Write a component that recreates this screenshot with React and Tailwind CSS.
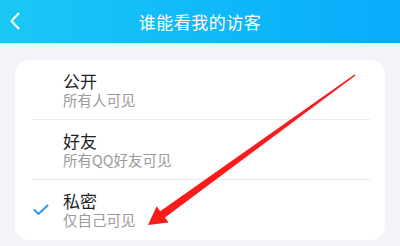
import React from "react";

const rows = [
  { title: "公开", sub: "所有人可见", checked: false },
  { title: "好友", sub: "所有QQ好友可见", checked: false },
  { title: "私密", sub: "仅自己可见", checked: true },
];

export default function App() {
  return (
    <div
      className="relative w-[400px] h-[246px] overflow-hidden bg-[#f3f4f9]"
      style={{ fontFamily: '"Noto Sans CJK SC", "Noto Sans", sans-serif' }}
    >
      <div className="relative h-[43px] flex items-center justify-center bg-gradient-to-r from-[#1ac8f6] to-[#09abfb]">
        <svg className="absolute left-[9px] top-[12px]" width="12" height="18" viewBox="0 0 12 18">
          <path d="M9.5 1.5 L2.5 9 L9.5 16.5" fill="none" stroke="#fff" strokeWidth="2" strokeLinecap="round" strokeLinejoin="round" />
        </svg>
        <span className="text-white text-[17px] leading-none tracking-[0.5px]">谁能看我的访客</span>
      </div>
      <div className="px-[15px] pt-[17px]">
        <div className="bg-white rounded-[14px] h-[180px] flex flex-col">
          {rows.map((r, i) => (
            <div key={i} className="relative h-[60px] flex">
              <div className="w-[48px] flex items-center justify-center pl-[4px]">
                {r.checked && (
                  <svg width="16" height="12" viewBox="0 0 16 12">
                    <path d="M1.5 6 L5.5 10 L14.5 1.5" fill="none" stroke="#2e98ee" strokeWidth="2" strokeLinecap="round" strokeLinejoin="round" />
                  </svg>
                )}
              </div>
              <div className="flex flex-col pt-[11px]">
                <span className="text-[17px] leading-[20px] text-[#1f1f1f]">{r.title}</span>
                <span className="text-[14.5px] leading-[18px] text-[#9a9a9a]">{r.sub}</span>
              </div>
              {i < 2 && (
                <div className="absolute left-[17px] right-[15px] bottom-0 h-px bg-[#ececf0]" />
              )}
            </div>
          ))}
        </div>
      </div>
      <svg className="absolute left-0 top-0 pointer-events-none" width="400" height="246" viewBox="0 0 400 246">
        <polygon
          points="355.5,75.6 165.0,217.6 168.5,222.5 148,225 156.7,206.3 160.2,211.2 354.5,74.4"
          fill="#fb1b1b"
        />
      </svg>
    </div>
  );
}
